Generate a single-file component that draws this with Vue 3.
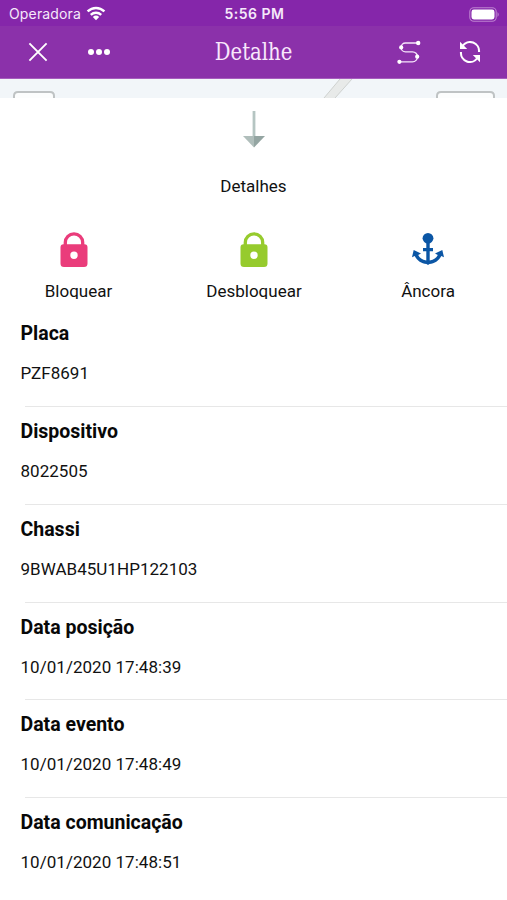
<script setup>
const actions = [
  { label: 'Bloquear', icon: 'lock', color: '#ea3c7b' },
  { label: 'Desbloquear', icon: 'lock', color: '#96cb2d' },
  { label: 'Âncora', icon: 'anchor', color: '#0b56a5' },
]
const rows = [
  { label: 'Placa', value: 'PZF8691' },
  { label: 'Dispositivo', value: '8022505' },
  { label: 'Chassi', value: '9BWAB45U1HP122103' },
  { label: 'Data posição', value: '10/01/2020 17:48:39' },
  { label: 'Data evento', value: '10/01/2020 17:48:49' },
  { label: 'Data comunicação', value: '10/01/2020 17:48:51' },
]
</script>

<template>
  <div class="screen">
    <div class="status">
      <div class="carrier">
        <span>Operadora</span>
        <svg width="20" height="15" viewBox="0 0 20 15" fill="none" stroke="#fff" stroke-width="2.5">
          <path d="M1.6 5.4C6.5.8 13.5.8 18.4 5.4M4.8 8.8C7.8 6 12.2 6 15.2 8.8" />
          <path d="M6.8 11Q10 8.2 13.2 11L10 14.2Z" fill="#fff" stroke="none" />
        </svg>
      </div>
      <span class="clock">5:56 PM</span>
      <svg class="battery" width="31" height="15" viewBox="0 0 31 15">
        <rect x=".8" y=".8" width="26.4" height="13.4" rx="4" fill="none" stroke="#bd82d0" stroke-width="1.1" />
        <rect x="2.5" y="2.5" width="23" height="10" rx="2.4" fill="#fff" />
        <path d="M28.5 5Q31 7.5 28.5 10Z" fill="#bd82d0" />
      </svg>
    </div>
    <header class="bar">
      <div class="tools">
        <svg width="20" height="20" viewBox="0 0 20 20" stroke="#fff" stroke-width="1.9"><path d="M1.4 1.4l17.2 17.2M18.6 1.4L1.4 18.6" /></svg>
        <svg width="22" height="8" viewBox="0 0 22 8" fill="#fff"><circle cx="3" cy="4" r="3" /><circle cx="11" cy="4" r="3" /><circle cx="19" cy="4" r="3" /></svg>
      </div>
      <h1>Detalhe</h1>
      <div class="tools end">
        <svg width="24" height="24" viewBox="0 0 24 24" fill="none" stroke="#f6e6fb" stroke-width="1.3">
          <path d="M21 3H8.5a4.4 4.4 0 0 0 0 8.8H15.500a5 5 0 0 1 0 10H3" />
          <g fill="#fff" stroke="none"><circle cx="21.2" cy="3" r="2.2" /><circle cx="4.2" cy="7.4" r="2.1" /><circle cx="20.2" cy="16.7" r="2.1" /><circle cx="2.4" cy="21.8" r="2.1" /></g>
        </svg>
        <svg width="22" height="22" viewBox="0 0 22 22" fill="none" stroke="#fff" stroke-width="2.1">
          <path d="M3.6 5A9 9 0 0 1 20 11M18.4 17A9 9 0 0 1 2 11" />
          <path d="M1 .8V8H8.200ZM21 21.200V14H13.800Z" fill="#fff" stroke="none" />
        </svg>
      </div>
    </header>
    <svg class="map" width="507" height="19" viewBox="0 0 507 19">
      <rect width="507" height="19" fill="#f2f6f9" />
      <path d="M324 19L340 0H352L335 19Z" fill="#e8eae9" />
      <path d="M324 19L340 0M335 19L352 0" stroke="#ced1cf" fill="none" />
      <path d="M14 19V17Q14 13 18 13H50Q54 13 54 17V19M437 19V17Q437 13 441 13H490Q494 13 494 17V19" fill="#fcfdfd" stroke="#bfc3c4" stroke-width="2" />
    </svg>
    <section class="sheet">
      <svg class="arrow" width="22" height="38" viewBox="0 0 22 38">
        <path d="M9.6 1H12.4V27H9.6Z" fill="#b5c5c2" />
        <path d="M0 26H11V37.5Z" fill="#b0bebb" /><path d="M11 26H22L11 37.5Z" fill="#94a5a2" />
      </svg>
      <div class="caption">Detalhes</div>
      <div class="actions">
        <div v-for="a in actions" :key="a.label" class="action" :class="a.icon">
          <svg v-if="a.icon === 'lock'" width="28" height="36" viewBox="0 0 28 36">
            <path d="M5.3 14V10.5a8.7 8.7 0 0 1 17.4 0V14" fill="none" :stroke="a.color" stroke-width="3.3" />
            <path fill-rule="evenodd" :fill="a.color" d="M3.5 12.3h21a3 3 0 0 1 3 3v16.2a3.5 3.5 0 0 1-3.5 3.5H4a3.5 3.5 0 0 1-3.5-3.5V15.3a3 3 0 0 1 3-3zM14 19.6a3.7 3.7 0 1 0 0 7.4a3.7 3.7 0 0 0 0-7.4z" />
          </svg>
          <svg v-else width="32" height="36" viewBox="0 0 32 36" :fill="a.color">
            <circle cx="16" cy="6.3" r="5.4" />
            <path d="M14.3 10h3.4v6H21v3.2h-3.3v9.3c4.2-.7 6.7-2.6 8.1-5.500l-2.800-1.400L30.300 18l1.700 7.200-2.700-1.200c-2.600 5-6.700 7.500-11.800 7.900L16 33l-1.500-1.100C9.400 31.500 5.300 29 2.700 24L0 25.200l1.700-7.200 7.300 3.600L6.200 23c1.400 2.900 3.900 4.800 8.100 5.500v-9.300H11V16h3.300z" />
          </svg>
          <span>{{ a.label }}</span>
        </div>
      </div>
      <dl>
        <div v-for="r in rows" :key="r.label" class="row">
          <dt>{{ r.label }}</dt>
          <dd>{{ r.value }}</dd>
        </div>
      </dl>
    </section>
  </div>
</template>

<style>
body { margin: 0; overflow: hidden; background: #fff; }
</style>
<style scoped>
.screen { width: 507px; height: 900px; overflow: hidden; background: #fff; color: #111; font-family: Roboto, sans-serif; }
.screen * { box-sizing: border-box; }
svg { display: block; flex: none; }
.status { height: 26px; display: grid; grid-template-columns: 1fr auto 1fr; align-items: center; padding: 2px 7px 0 9px; background: #8526aa; color: #f5e9fa; font: 14px/24px Inter, sans-serif; }
.carrier { display: flex; align-items: center; gap: 5px; letter-spacing: .15px; }
.carrier svg { margin-top: -2px; }
.clock { font-weight: 600; font-size: 14px; letter-spacing: .5px; }
.battery { justify-self: end; }
.bar { height: 53px; display: grid; grid-template-columns: 1fr auto 1fr; align-items: center; padding: 0 26px 0 28px; background: #8b31aa; border-bottom: 1px solid #a65dbd; }
.tools { display: flex; align-items: center; gap: 40px; }
.end { justify-content: flex-end; gap: 38px; }
h1 { margin: 0 -3px; font: 400 24px/30px "DejaVu Serif Condensed", "DejaVu Serif", serif; font-stretch: condensed; color: #f8e7fc; transform: translateX(-1px) scaleX(.91); }
.sheet { height: 802px; background: #fff; }
.arrow { margin: 12px auto 0; }
.caption { margin-top: 28px; text-align: center; font-size: 17px; line-height: 20px; }
.actions { display: grid; grid-template-columns: 67px 1fr 54px; justify-items: center; margin-top: 36px; padding: 0 52px 0 45px; height: 67px; overflow: hidden; }
.action { display: flex; flex-direction: column; align-items: center; font-size: 17px; line-height: 20px; }
.action span { margin-top: 13px; }
.action:first-child svg { margin-right: 10px; }
.action:nth-child(2) { margin-right: 5px; }
dl { margin: 10.3px 0 0; }
.row { height: 97.75px; padding: 12px 0 0 20.5px; background: linear-gradient(#e7e7e7, #e7e7e7) 25px 100% / 100% 1px no-repeat; }
.row:last-child { background: none; }
dt { font-weight: 700; font-size: 19.5px; line-height: 26px; color: #080808; }
dd { margin: 16px 0 0; font-size: 17px; line-height: 20px; letter-spacing: .03px; }
</style>
